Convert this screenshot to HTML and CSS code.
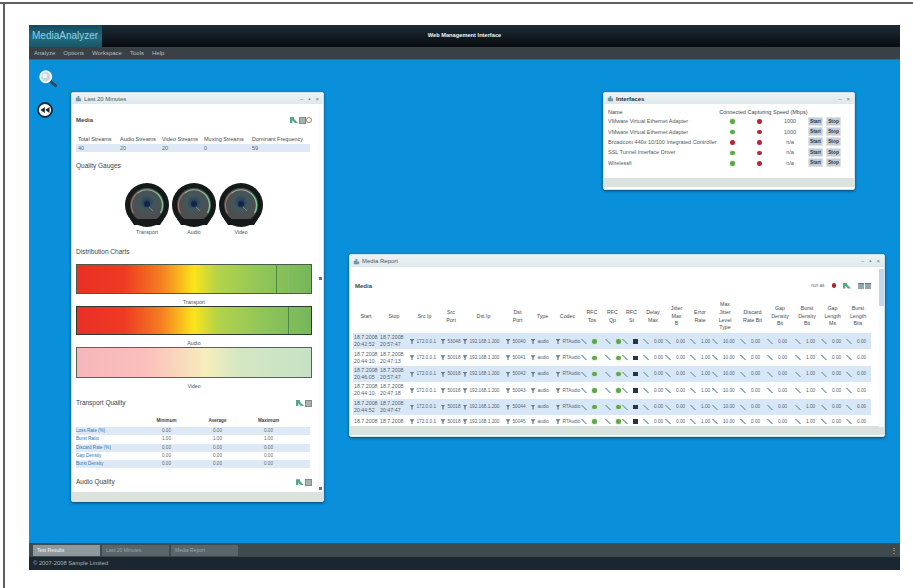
FILE: index.html
```html
<!DOCTYPE html>
<html lang="en">
<head>
<meta charset="utf-8">
<title>Web Management Interface</title>
<link rel="stylesheet" href="styles.css">
</head>
<body>
<div class="sheet">
  <div class="app">
    <header class="masthead">
      <div class="logo">MediaAnalyzer</div>
      <div class="app-title">Web Management Interface</div>
    </header>
    <nav class="menubar">
      <span>Analyze</span><span>Options</span><span>Workspace</span><span>Tools</span><span>Help</span>
    </nav>
    <main class="desktop">
      <svg class="tool tool-search" viewBox="0 0 20 20" aria-hidden="true">
        <path d="M11.500 11.500l7 6" stroke="#2f4552" stroke-width="3" stroke-linecap="round"/>
        <circle cx="7.500" cy="7.500" r="6.200" fill="#c7d8e2" stroke="#f4f8fa" stroke-width="2"/>
        <circle cx="6.500" cy="6.500" r="2.500" fill="#eef4f7"/>
      </svg>
      <svg class="tool tool-back" viewBox="0 0 16 16" aria-hidden="true">
        <circle cx="8" cy="8" r="7" fill="#fff" stroke="#142c38" stroke-width="1.800"/>
        <path d="M7.800 5v6L3.500 8zM12.500 5v6L8.200 8z" fill="#16242c"/>
      </svg>

      <!-- Test results window -->
      <section class="window win-results">
        <div class="titlebar">
          <svg class="win-icon" viewBox="0 0 8 8"><path d="M1 7V3h2v4zm2 0V1h2v6zm2 0V4h2v3z" fill="#6f95ab"/></svg>
          <span class="win-name">Last 20 Minutes</span>
          <span class="win-btns"><i>–</i><i>▪</i><i>×</i></span>
        </div>
        <div class="win-body">
          <div class="panel-head first-head">
            <h3 class="bold">Media</h3>
            <span class="mini-icons"><b class="sw-green"></b><b class="sw-grey"></b><b class="sw-ring"></b></span>
          </div>
          <table class="summary">
            <thead><tr><th>Total Streams</th><th>Audio Streams</th><th>Video Streams</th><th>Muxing Streams</th><th>Dominant Frequency</th></tr></thead>
            <tbody><tr><td>40</td><td>20</td><td>20</td><td>0</td><td>59</td></tr></tbody>
          </table>
          <h3 class="section">Quality Gauges</h3>
          <div class="gauges">
            <figure class="gauge">
              <svg viewBox="0 0 46 46"><use href="#dial"/></svg>
              <figcaption>Transport</figcaption>
            </figure>
            <figure class="gauge">
              <svg viewBox="0 0 46 46"><use href="#dial"/></svg>
              <figcaption>Audio</figcaption>
            </figure>
            <figure class="gauge">
              <svg viewBox="0 0 46 46"><use href="#dial"/></svg>
              <figcaption>Video</figcaption>
            </figure>
          </div>
          <h3 class="charts-head">Distribution Charts</h3>
          <div class="heat heat-a"><span class="tick tick-a"></span><span class="tick tick-a2"></span></div>
          <p class="caption">Transport</p>
          <div class="heat heat-b"><span class="tick tick-b"></span></div>
          <p class="caption">Audio</p>
          <div class="heat heat-pale"></div>
          <p class="caption">Video</p>
          <div class="panel-head quality-head">
            <h3>Transport Quality</h3>
            <span class="mini-icons"><b class="sw-green"></b><b class="sw-grey"></b></span>
          </div>
          <table class="quality">
            <thead><tr><th></th><th>Minimum</th><th>Average</th><th>Maximum</th></tr></thead>
            <tbody>
              <tr><td>Loss Rate (%)</td><td>0.00</td><td>0.00</td><td>0.00</td></tr>
              <tr><td>Burst Ratio</td><td>1.00</td><td>1.00</td><td>1.00</td></tr>
              <tr><td>Discard Rate (%)</td><td>0.00</td><td>0.00</td><td>0.00</td></tr>
              <tr><td>Gap Density</td><td>0.00</td><td>0.00</td><td>0.00</td></tr>
              <tr><td>Burst Density</td><td>0.00</td><td>0.00</td><td>0.00</td></tr>
            </tbody>
          </table>
          <div class="panel-head audio-head">
            <h3>Audio Quality</h3>
            <span class="mini-icons"><b class="sw-green"></b><b class="sw-grey"></b></span>
          </div>
        </div>
        <div class="scroll-rail rail-results"><u class="arrow arrow-mid"></u><u class="arrow arrow-end"></u></div>
        <div class="statusbar"></div>
      </section>

      <!-- Network interfaces window -->
      <section class="window win-if">
        <div class="titlebar">
          <svg class="win-icon" viewBox="0 0 8 8"><path d="M1 7V3h2v4zm2 0V1h2v6zm2 0V4h2v3z" fill="#6f95ab"/></svg>
          <span class="win-name strong">Interfaces</span>
          <span class="win-btns"><i>–</i><i>×</i></span>
        </div>
        <table class="ifaces">
          <thead><tr><th class="nm">Name</th><th>Connected</th><th>Capturing</th><th>Speed (Mbps)</th><th></th></tr></thead>
          <tbody>
            <tr><td class="nm">VMware Virtual Ethernet Adapter</td><td><em class="led on"></em></td><td><em class="led off"></em></td><td>1000</td><td class="acts"><button>Start</button><button>Stop</button></td></tr>
            <tr><td class="nm">VMware Virtual Ethernet Adapter</td><td><em class="led on"></em></td><td><em class="led off"></em></td><td>1000</td><td class="acts"><button>Start</button><button>Stop</button></td></tr>
            <tr><td class="nm">Broadcom 440x 10/100 Integrated Controller</td><td><em class="led off"></em></td><td><em class="led off"></em></td><td>n/a</td><td class="acts"><button>Start</button><button>Stop</button></td></tr>
            <tr><td class="nm">SSL Tunnel Interface Driver</td><td><em class="led on"></em></td><td><em class="led off"></em></td><td>n/a</td><td class="acts"><button>Start</button><button>Stop</button></td></tr>
            <tr><td class="nm">Wirelessfi</td><td><em class="led on"></em></td><td><em class="led off"></em></td><td>n/a</td><td class="acts"><button>Start</button><button>Stop</button></td></tr>
          </tbody>
        </table>
        <div class="statusbar status-inset"></div>
      </section>

      <!-- Media session report window -->
      <section class="window win-report">
        <div class="titlebar title-tall">
          <svg class="win-icon" viewBox="0 0 8 8"><path d="M1 7V3h2v4zm2 0V1h2v6zm2 0V4h2v3z" fill="#6f95ab"/></svg>
          <span class="win-name">Media Report</span>
          <span class="win-btns"><i>–</i><i>▪</i><i>×</i></span>
        </div>
        <div class="report-body">
          <div class="report-head">
            <h3 class="bold">Media</h3>
            <span class="report-tools">
              <span class="tool-label">run as</span>
              <em class="led stop"></em>
              <b class="sw-green"></b>
              <span class="doc-pair"><b></b><b></b></span>
            </span>
          </div>
          <table class="report">
            <colgroup>
              <col><col><col><col><col><col><col><col><col><col>
              <col><col><col><col><col><col><col><col><col><col>
            </colgroup>
            <thead id="report-head"></thead>
            <tbody id="report-rows"></tbody>
          </table>
        </div>
        <div class="scroll-rail rail-report"><span class="rail-thumb"></span></div>
        <div class="statusbar status-inset-s"></div>
      </section>
    </main>
    <div class="taskbar">
      <span class="task active">Test Results</span>
      <span class="task">Last 20 Minutes</span>
      <span class="task">Media Report</span>
      <span class="task-more">⋮</span>
    </div>
    <footer class="legal">© 2007-2008 Sample Limited</footer>
  </div>
</div>

<svg class="defs" aria-hidden="true">
  <defs>
    <radialGradient id="dial-face" cx="50%" cy="42%" r="60%">
      <stop offset="0" stop-color="#1a3860"/>
      <stop offset=".35" stop-color="#425659"/>
      <stop offset="1" stop-color="#544a4c"/>
    </radialGradient>
    <g id="dial">
      <circle cx="23" cy="23" r="22" fill="#14191a"/>
      <circle cx="23" cy="23" r="17" fill="url(#dial-face)"/>
      <path d="M9.500 31A15.500 15.500 0 0 1 13.500 11" fill="none" stroke="#a5705f" stroke-width="1.200"/>
      <path d="M13.500 11A15.500 15.500 0 0 1 32.500 11" fill="none" stroke="#9eaa8e" stroke-width="1.200"/>
      <path d="M32.500 11A15.500 15.500 0 0 1 36.500 31" fill="none" stroke="#78c48a" stroke-width="1.500"/>
      <path d="M23 23l6 6" stroke="#77868c" stroke-width="1"/>
      <circle cx="23" cy="22" r="3" fill="#12244a"/>
      <path d="M6 37h34l-4 6H10z" fill="#14191a"/>
    </g>
  </defs>
</svg>

<script src="report.js"></script>
</body>
</html>
```

FILE: report.js
```js
// Builds the media session table from its column titles and rows.
const titles = [
  'Start', 'Stop', 'Src Ip', 'Src<br>Port', 'Dst Ip', 'Dst<br>Port', 'Type', 'Codec',
  'RFC<br>Tos', 'RFC<br>Qp', 'RFC<br>St', 'Delay<br>Max', 'Jitter<br>Max<br>B', 'Error<br>Rate',
  'Max<br>Jitter<br>Level<br>Type', 'Discard<br>Rate Bit', 'Gap<br>Density<br>Bit',
  'Burst<br>Density<br>Bit', 'Gap<br>Length<br>Ms', 'Burst<br>Length<br>Bits'
];
const trend = '<s class="trend"></s>';
const funnel = '<s class="funnel"></s>';
const times = [
  ['18.7.2008<br>20:42:52', '18.7.2008<br>20:57:47'],
  ['18.7.2008<br>20:44:10', '18.7.2008<br>20:47:13'],
  ['18.7.2008<br>20:46:05', '18.7.2008<br>20:57:47'],
  ['18.7.2008<br>20:44:10', '18.7.2008<br>20:47:18'],
  ['18.7.2008<br>20:44:52', '18.7.2008<br>20:47:47'],
  ['18.7.2008', '18.7.2008']
];
const ports = [53048, 50018, 50018, 50018, 50018, 50018];
const metrics = ['0.00', '0.00', '1.00', '10.00', '0.00', '0.00', '1.00', '0.00', '0.00'];
const filtered = v => `<td class="cf">${funnel}${v}</td>`;

document.getElementById('report-head').innerHTML =
  `<tr>${titles.map(t => `<th>${t}</th>`).join('')}</tr>`;

document.getElementById('report-rows').innerHTML = times.map((t, i) => `<tr>
  <td class="when">${t[0]}</td>
  <td class="when">${t[1]}</td>
  ${filtered('172.0.0.1')}${filtered(ports[i])}${filtered('192.168.1.200')}
  ${filtered('5004' + i)}${filtered('audio')}${filtered('RTAudio')}
  <td class="flag">${trend}<em class="led on"></em></td>
  <td class="flag">${trend}<em class="led on"></em></td>
  <td class="flag">${trend}<em class="led dark"></em></td>
  ${metrics.map(v => `<td class="metric">${trend}${v}</td>`).join('')}
</tr>`).join('');
```

FILE: styles.css
```css
html, body { margin: 0; height: 100%; background: #fff; overflow: hidden; }
body { font-family: "Liberation Sans", Arial, sans-serif; color: #26323a; }

.sheet {
  box-sizing: border-box;
  height: 586px;
  margin-top: 2px;
  padding: 21px 13px 0 29px;
  border-top: 2px solid #5d6062;
  position: relative;
}
.sheet::before {
  content: "";
  position: absolute;
  left: 3px;
  top: 0;
  bottom: 0;
  width: 2px;
  background: #5d6062;
}
.app { width: 871px; height: 545px; display: flex; flex-direction: column; }

.masthead {
  flex: none;
  height: 22px;
  display: flex;
  position: relative;
  background: linear-gradient(#1d2c36, #121a20 55%, #090d0f);
}
.logo {
  width: 70px;
  padding-left: 3px;
  font-size: 10px;
  line-height: 21px;
  color: #8ed0e4;
  background: linear-gradient(#164a5c, #1f6a80 60%, #1a5568);
  white-space: nowrap;
  overflow: hidden;
}
.app-title {
  position: absolute;
  left: 0;
  right: 0;
  top: 0;
  text-align: center;
  font-size: 5.700px;
  font-weight: bold;
  line-height: 20px;
  color: #f2f6f8;
}
.menubar {
  flex: none;
  height: 13px;
  display: flex;
  gap: 8px;
  align-items: center;
  padding-left: 5px;
  font-size: 6px;
  color: #b3bfc4;
  background: #394147;
  border-bottom: 1px solid #2b6f95;
  box-sizing: border-box;
}
.desktop { flex: 1; position: relative; background: #0a8fda; overflow: hidden; }

.tool { position: absolute; }
.tool-search { left: 9px; top: 10px; width: 20px; height: 18px; }
.tool-back { left: 8px; top: 42px; width: 16px; height: 16px; }

.window {
  position: absolute;
  box-sizing: border-box;
  display: flex;
  flex-direction: column;
  background: #fff;
  border: 1px solid #d3e1e8;
  border-radius: 2px;
  box-shadow: 0 1px 3px rgba(8, 40, 70, .75);
}
.win-results { left: 42px; top: 32px; width: 253px; height: 410px; }
.win-if { left: 574px; top: 32px; width: 252px; height: 98px; }
.win-report { left: 320px; top: 194px; width: 536px; height: 183px; }

.titlebar {
  flex: none;
  height: 11px;
  display: flex;
  align-items: center;
  gap: 2px;
  padding: 0 4px 0 3px;
  background: linear-gradient(#eef2f4, #dce9ec);
}
.title-tall { height: 12px; }
.win-icon { width: 7px; height: 7px; }
.win-name { font-size: 6px; color: #4b5a63; }
.win-name.strong { font-weight: bold; color: #26323a; }
.win-btns { margin-left: auto; display: flex; gap: 5px; font-size: 6px; line-height: 6px; color: #66767f; }
.win-btns i { font-style: normal; }
.statusbar { flex: none; height: 9px; margin-top: auto; background: #dbe3df; }
.status-inset { margin-bottom: 2px; }
.status-inset-s { margin-bottom: 1px; }

/* Results window */
.win-body { flex: 1; min-height: 0; padding: 0 11px 0 4px; overflow: hidden; }
h3 { margin: 0; font-size: 6.500px; line-height: 8px; font-weight: normal; color: #3a444b; }
h3.bold { font-size: 6px; font-weight: bold; }
.panel-head { display: flex; justify-content: space-between; align-items: center; height: 8px; }
.first-head { margin-top: 12px; }
.mini-icons { display: inline-flex; gap: 1px; align-items: center; }
.sw-green {
  display: inline-block;
  width: 8px;
  height: 6px;
  background: #5aa58a;
  clip-path: polygon(0 0, 50% 0, 50% 30%, 100% 100%, 60% 100%, 30% 55%, 30% 100%, 0 100%);
}
.sw-grey { display: inline-block; width: 5px; height: 5px; background: #a7b3ae; border: 1px solid #7e8d86; }
.sw-ring { display: inline-block; width: 4px; height: 4px; background: #fff; border: 1px solid #a97a5c; border-radius: 50%; margin-left: -1px; }

table { border-collapse: collapse; table-layout: fixed; }
.summary { width: 234px; margin-top: 10px; font-size: 5.500px; }
.summary th { font-weight: normal; color: #3f4a51; text-align: left; padding: 0 0 0 2px; height: 10px; white-space: nowrap; }
.summary th:nth-child(1), .summary th:nth-child(2), .summary th:nth-child(3) { width: 40px; }
.summary th:nth-child(4) { width: 46px; }
.summary td { background: #dfe9f5; height: 8px; padding: 0 0 0 2px; line-height: 6px; color: #5a6770; }
.section { margin-top: 10px; }
.gauges { display: flex; justify-content: center; gap: 1px; margin: 12px 0 0; }
.gauge { margin: 0; width: 46px; text-align: center; font-size: 5.200px; line-height: 6px; color: #48535b; }
.gauge svg { display: block; width: 46px; height: 46px; }
.gauge figcaption { margin-top: 1px; }

.charts-head { margin-top: 13px; margin-bottom: 8px; }
.heat {
  position: relative;
  box-sizing: border-box;
  border: 1px solid #4d5a45;
  background: linear-gradient(90deg, #ea2f25 0, #ee3a23 20%, #f47f21 36%, #fbe41b 50%, #b4d34a 60%, #92c658 78%, #76b75c 100%);
}
.heat-a { height: 30px; }
.heat-b { height: 29px; border-color: #2f3a2c; }
.heat-pale { height: 31px; background: linear-gradient(90deg, #f6b7bc, #fbc0bc 30%, #f7edbc 55%, #d3e7c4 70%, #c7e2c4); border-color: #5a6358; }
.tick { position: absolute; top: 0; bottom: 0; width: 1px; background: #4e8a48; }
.tick-a { left: 85%; }
.tick-a2 { left: 90%; background: #86bf68; }
.tick-b { left: 90%; }
.caption { margin: 0; height: 12px; box-sizing: border-box; padding-top: 5px; font-size: 5.200px; line-height: 6px; text-align: center; color: #4a555c; }

.quality-head { margin-top: 9px; }
.quality { width: 234px; margin-top: 10px; font-size: 4.600px; }
.quality th { height: 10px; vertical-align: top; line-height: 8px; font-weight: bold; color: #3a454d; padding: 0; }
.quality td { height: 8.250px; padding: 0; line-height: 6px; text-align: center; color: #5c6870; }
.quality th:nth-child(1) { width: 65px; }
.quality th:nth-child(2), .quality th:nth-child(3) { width: 51px; }
.quality th:nth-child(4) { padding-right: 16px; }
.quality td:nth-child(4) { padding-right: 16px; }
.quality td:first-child { text-align: left; color: #2878b4; }
.quality tbody tr:nth-child(odd) td { background: #dfe9f5; }
.audio-head { margin-top: 10px; }

.scroll-rail { position: absolute; right: 0; bottom: 9px; width: 5px; background: #fafbfb; }
.rail-results { top: 11px; }
.rail-report { top: 14px; }
.rail-thumb { display: block; height: 37px; background: #c3d5ea; }
.arrow { position: absolute; left: 1px; width: 3px; height: 3px; background: #6a7479; text-decoration: none; }
.arrow-mid { top: 173px; }
.arrow-end { top: 383px; }

/* Interfaces */
.ifaces { margin: 4px 0 0 4px; font-size: 5.500px; width: 233px; }
.ifaces th { font-weight: normal; height: 8px; padding: 0; white-space: nowrap; text-align: center; color: #3e4950; }
.ifaces td { height: 10.400px; padding: 0; text-align: center; color: #4d5960; }
.ifaces .nm { text-align: left; white-space: nowrap; }
.ifaces th:nth-child(1) { width: 111px; }
.ifaces th:nth-child(2), .ifaces th:nth-child(3) { width: 27px; }
.ifaces th:nth-child(4) { width: 34px; }
.led { display: inline-block; width: 4.500px; height: 4.500px; border-radius: 50%; vertical-align: middle; }
.led.on { background: #5da848; box-shadow: 0 0 1.500px .5px #c4e5b5; }
.led.off { background: #bb2636; }
.led.dark { background: #273347; border-radius: 0; }
.led.stop { background: #a4262c; }
.ifaces td.acts { white-space: nowrap; text-align: right; padding-left: 1px; }
.acts button {
  width: 15px;
  height: 9px;
  margin: 0;
  padding: 0;
  font: bold 4.800px "Liberation Sans", Arial, sans-serif;
  color: #333d44;
  background: #c3ccd4;
  border: 1px solid #dde3e6;
}
.acts button + button { margin-left: 3px; }

/* Report */
.report-body { flex: 1; min-height: 0; padding: 0 0 0 3px; overflow: hidden; }
.report-head {
  height: 33px;
  box-sizing: border-box;
  padding: 4px 13px 0 2px;
  display: flex;
  align-items: center;
  justify-content: space-between;
}
.report-tools { display: inline-flex; align-items: center; gap: 7px; }
.tool-label { font-size: 4.800px; color: #5b6a72; }
.doc-pair { display: inline-flex; gap: 1px; }
.doc-pair b { display: block; width: 6px; height: 6px; background: #93a8ac; border-top: 1px solid #5f7b85; box-sizing: border-box; }
.report { width: 518px; font-size: 4.700px; white-space: nowrap; }
.report col:nth-child(1) { width: 26px; }
.report col:nth-child(2) { width: 30px; }
.report col:nth-child(3) { width: 31px; }
.report col:nth-child(4) { width: 22px; }
.report col:nth-child(5) { width: 43px; }
.report col:nth-child(6), .report col:nth-child(7), .report col:nth-child(8) { width: 25px; }
.report col:nth-child(9) { width: 24px; }
.report col:nth-child(10) { width: 17px; }
.report col:nth-child(11) { width: 21px; }
.report col:nth-child(12) { width: 22px; }
.report col:nth-child(13) { width: 25px; }
.report col:nth-child(14) { width: 22px; }
.report col:nth-child(15) { width: 28px; }
.report col:nth-child(16) { width: 27px; }
.report col:nth-child(17) { width: 28px; }
.report col:nth-child(18) { width: 26px; }
.report col:nth-child(19) { width: 25px; }
.report col:nth-child(20) { width: 26px; }
.report th { font-weight: normal; font-size: 5.300px; color: #3f4a52; text-align: center; padding: 0; line-height: 7.700px; height: 33px; }
.report td { height: 16.400px; padding: 0; text-align: left; line-height: 7px; color: #56636c; }
.report td.when { padding-left: 1px; font-size: 5.300px; }
.report tbody tr:nth-child(odd) td { background: #d8e7f7; }
.report td.cf { padding-left: .5px; }
.report td.flag { padding-left: 1px; }
.report td.metric { padding-left: 1px; }
/* The window's status strip covers the lower part of the last row */
.report tbody tr:last-child td { vertical-align: top; padding-top: 4px; line-height: 5px; }
.flag .trend { margin-right: 5px; }
.funnel {
  display: inline-block;
  width: 5px;
  height: 5px;
  margin-right: 2px;
  vertical-align: middle;
  text-decoration: none;
  background: #5f7a89;
  clip-path: polygon(0 0, 100% 0, 62% 45%, 62% 100%, 38% 100%, 38% 45%);
}
.trend {
  display: inline-block;
  width: 6px;
  height: 5px;
  margin-right: 5px;
  vertical-align: middle;
  text-decoration: none;
  background: linear-gradient(to top right, transparent 40%, #8fb3c3 40%, #8fb3c3 60%, transparent 60%);
}

.taskbar {
  flex: none;
  height: 14px;
  display: flex;
  align-items: center;
  gap: 2px;
  padding-left: 4px;
  background: #3f4a4e;
  font-size: 5px;
  color: #98a5a9;
}
.task { box-sizing: border-box; width: 67px; height: 11px; line-height: 11px; padding-left: 4px; background: #59656a; }
.task.active { background: #8f989c; color: #f3f5f5; }
.task-more { margin-left: auto; margin-right: 2px; font-size: 8px; color: #c5cdd0; }
.legal { flex: none; height: 13px; line-height: 12px; padding-left: 4px; font-size: 5.800px; color: #aab3b5; background: #1a2730; }
.defs { position: absolute; width: 0; height: 0; }
```
